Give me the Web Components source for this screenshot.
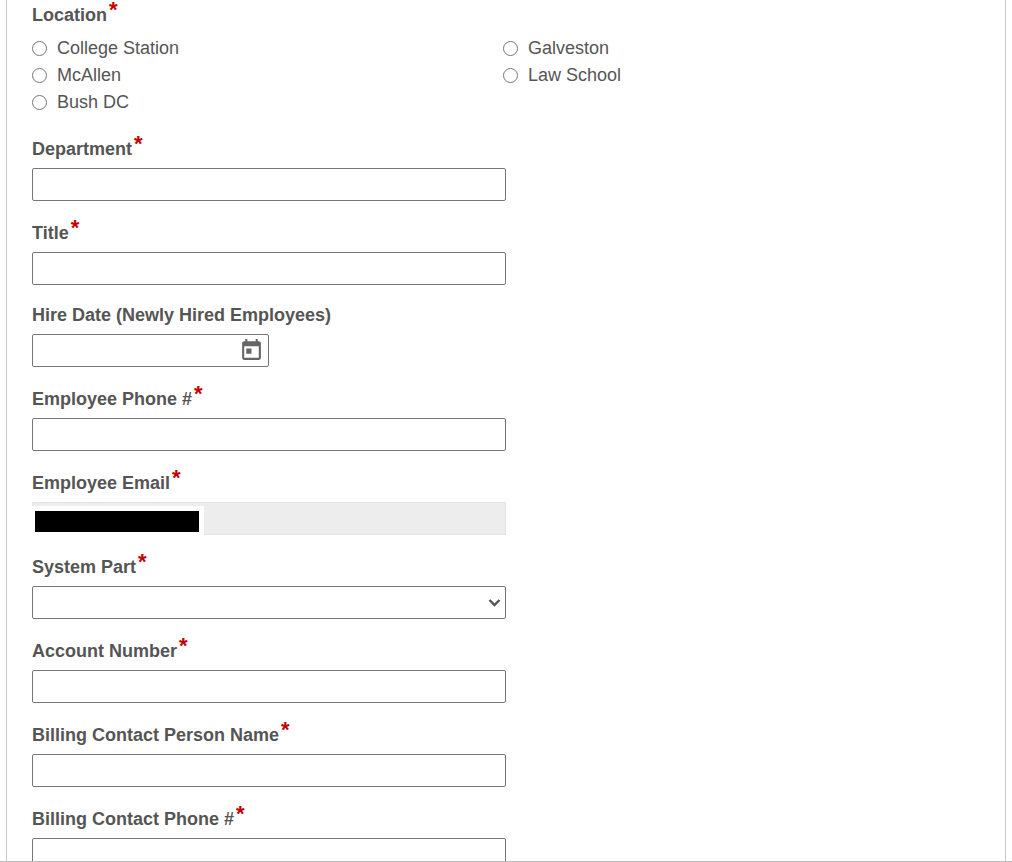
<!DOCTYPE html>
<html lang="en">
<head>
<meta charset="utf-8">
<meta name="viewport" content="width=device-width, initial-scale=1">
<title>Employee Form</title>
<style>
    body {
        margin: 0;
        background: #fff;
        color: #555;
        font-family: Arial, "Liberation Sans", sans-serif;
        font-size: 18px;
    }
</style>
</head>
<body>

<form-panel>
    <radio-group label="Location" name="location" options="College Station|Galveston|McAllen|Law School|Bush DC" required></radio-group>
    <form-field label="Department" name="department" required></form-field>
    <form-field label="Title" name="title" required></form-field>
    <form-field label="Hire Date (Newly Hired Employees)" name="hireDate" type="date"></form-field>
    <form-field label="Employee Phone #" name="phone" required></form-field>
    <form-field label="Employee Email" name="email" type="masked" required></form-field>
    <form-field label="System Part" name="systemPart" type="select" required></form-field>
    <form-field label="Account Number" name="account" required></form-field>
    <form-field label="Billing Contact Person Name" name="billingName" required></form-field>
    <form-field label="Billing Contact Phone #" name="billingPhone" required></form-field>
</form-panel>

<script>
    // Label styles shared by every kind of field
    const labelStyles = `
        .label {
            display: block;
            padding: 0;
            margin-bottom: 7px;
            font-weight: bold;
            line-height: 24px;
        }
        :host([required]) .label {
            padding-top: 2px;
        }
        .star {
            margin-left: 2px;
            color: #c00000;
            font-size: 22px;
            line-height: 0;
            vertical-align: 4px;
        }
    `;

    function star(element) {
        return element.hasAttribute('required') ? '<span class="star" aria-hidden="true">*</span>' : '';
    }

    class FormPanel extends HTMLElement {
        constructor() {
            super();
            this.attachShadow({ mode: 'open' }).innerHTML = `
                <style>
                    :host {
                        display: block;
                        box-sizing: border-box;
                        height: 100vh;
                        overflow: hidden;
                        border-bottom: 1px solid #bbb;
                    }
                    form {
                        display: flex;
                        flex-direction: column;
                        gap: 18px;
                        margin: 0 6px;
                        padding: 1px 25px 24px;
                        border: solid #c8c8c8;
                        border-width: 0 1px;
                    }
                </style>
                <form><slot></slot></form>
            `;
        }
    }

    class RadioGroup extends HTMLElement {
        constructor() {
            super();
            this.attachShadow({ mode: 'open' });
        }

        connectedCallback() {
            const name = this.getAttribute('name');
            const options = this.getAttribute('options').split('|');

            this.shadowRoot.innerHTML = `
                <style>
                    ${labelStyles}
                    :host {
                        display: block;
                    }
                    fieldset {
                        min-width: 0;
                        margin: 0;
                        padding: 0;
                        border: 0;
                    }
                    .options {
                        display: grid;
                        grid-template-columns: 1fr 1fr;
                        padding: 1px 6px 1px 0;
                    }
                    .option {
                        display: flex;
                        align-items: center;
                        gap: 10px;
                        line-height: 27px;
                    }
                    input {
                        width: 15px;
                        height: 15px;
                        margin: 0;
                    }
                </style>
                <fieldset>
                    <legend class="label">${this.getAttribute('label')}${star(this)}</legend>
                    <div class="options">
                        ${options.map((option, i) => `
                            <div class="option">
                                <input type="radio" id="${name}${i}" name="${name}" value="${option}">
                                <label for="${name}${i}">${option}</label>
                            </div>
                        `).join('')}
                    </div>
                </fieldset>
            `;
        }
    }

    class FormField extends HTMLElement {
        constructor() {
            super();
            this.attachShadow({ mode: 'open' });
        }

        connectedCallback() {
            this.shadowRoot.innerHTML = `
                <style>
                    ${labelStyles}
                    :host {
                        display: block;
                    }
                    .box {
                        position: relative;
                        display: flex;
                        align-items: center;
                        box-sizing: border-box;
                        width: 50%;
                        height: 33px;
                        border: 1px solid #767676;
                        border-radius: 2px;
                        background: #fff;
                    }
                    .box.date {
                        width: 25%;
                    }
                    .box.masked {
                        border-color: #e3e3e3;
                        border-radius: 0;
                        background: #ededed;
                    }
                    input, select {
                        flex: 1;
                        box-sizing: border-box;
                        min-width: 0;
                        height: 100%;
                        margin: 0;
                        padding: 0 8px;
                        border: 0;
                        background: none;
                        color: inherit;
                        font: inherit;
                        appearance: none;
                    }
                    button {
                        display: flex;
                        margin: 0 4px 0 0;
                        padding: 0;
                        border: 0;
                        background: none;
                    }
                    .chevron {
                        position: absolute;
                        right: 4px;
                        pointer-events: none;
                    }
                    .mask {
                        position: absolute;
                        top: 3px;
                        bottom: -1px;
                        left: -1px;
                        box-sizing: border-box;
                        width: 172px;
                        border: solid #fff;
                        border-width: 5px 5px 3px 3px;
                        background: #000;
                    }
                </style>
                <label class="label" for="control">${this.getAttribute('label')}${star(this)}</label>
                ${this.renderControl()}
            `;
        }

        renderControl() {
            const name = this.getAttribute('name');

            switch (this.getAttribute('type')) {
                case 'select':
                    return `
                        <div class="box">
                            <select id="control" name="${name}"><option></option></select>
                            <svg class="chevron" width="13" height="9" viewBox="0 0 13 9" aria-hidden="true">
                                <path d="M1.500 2l5 5 5-5" fill="none" stroke="#555" stroke-width="2.4"/>
                            </svg>
                        </div>
                    `;
                case 'date':
                    return `
                        <div class="box date">
                            <input id="control" name="${name}" type="text">
                            <button type="button" aria-label="Choose date">
                                <svg width="25" height="25" viewBox="0 0 24 24" aria-hidden="true">
                                    <path fill="#666" d="M19 3h-1V1h-2v2H8V1H6v2H5c-1.1 0-2 .9-2 2v14c0 1.1.9 2 2 2h14c1.1 0 2-.9 2-2V5c0-1.1-.9-2-2-2zm0 16H5V8h14v11zM7 10h5v5H7z"/>
                                </svg>
                            </button>
                        </div>
                    `;
                case 'masked':
                    return `
                        <div class="box masked">
                            <input id="control" name="${name}" type="email" readonly>
                            <span class="mask"></span>
                        </div>
                    `;
                default:
                    return `
                        <div class="box">
                            <input id="control" name="${name}" type="text">
                        </div>
                    `;
            }
        }
    }

    customElements.define('form-panel', FormPanel);
    customElements.define('radio-group', RadioGroup);
    customElements.define('form-field', FormField);
</script>
</body>
</html>
